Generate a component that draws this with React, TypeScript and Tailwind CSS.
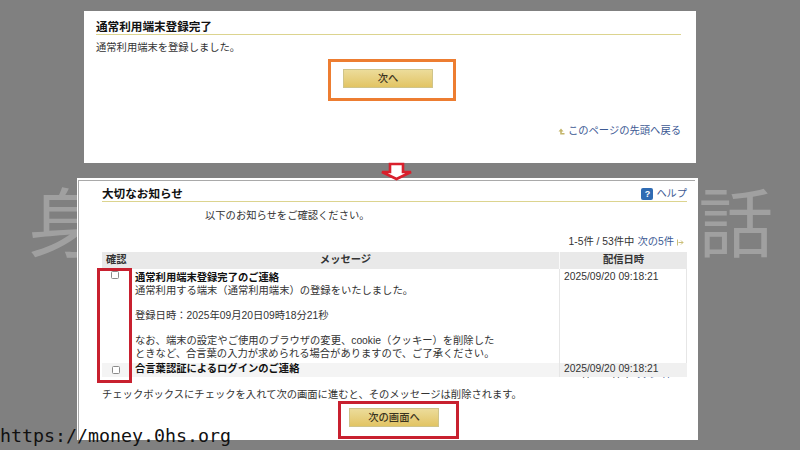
const jp = "font-['Liberation_Sans','Noto_Sans_CJK_JP',sans-serif]";

function GoldButton({ label, className }: { label: string; className: string }) {
  return (
    <div className={`flex h-[19px] w-[90px] items-center justify-center border border-[#cfc48a] bg-gradient-to-b from-[#ecdc9a] to-[#e2c463] text-[10.3px] font-medium text-[#3a3320] ${className}`}>
      {label}
    </div>
  );
}

function HeadingBar({ title, children, className }: { title: string; children?: React.ReactNode; className: string }) {
  return (
    <div className={`flex items-end justify-between border-b border-[#dcd48f] ${className}`}>
      <span className="text-[11.6px] font-bold leading-[14px] text-[#111]">{title}</span>
      {children}
    </div>
  );
}

function Checkbox() {
  return <span className="block h-[8px] w-[8px] rounded-[1.5px] border border-[#8a8a8a] bg-white" />;
}

export default function App() {
  return (
    <div className={`relative h-[450px] w-[800px] overflow-hidden bg-[#808080] ${jp}`}>
      {/* Watermark, seen only beside the panels */}
      <div className="absolute left-[28px] top-[176px] flex w-[745px] justify-between text-[74.5px] leading-[100px] text-[#a0a0a0]">
        <span>身</span>
        <span>話</span>
      </div>

      <div className="relative flex flex-col">
        <section className="ml-[84px] mt-[11px] h-[152px] w-[612px] bg-white pl-[12px] pr-[15px] pt-[9px]">
          <HeadingBar title="通常利用端末登録完了" className="h-[15px]" />
          <p className="mt-[6px] text-[10.3px] leading-[14px] text-[#333]">通常利用端末を登録しました。</p>
          <div className="mt-[14px] flex justify-center">
            <GoldButton label="次へ" className="ml-[-1px]" />
          </div>
          <div className="mt-[36px] flex items-center justify-end gap-[3px]">
            <svg width="7" height="7" viewBox="0 0 7 7">
              <path d="M3 0.5L0.5 3.5H2.2V6.5H6.5V5H3.8V3.5H5.5Z" fill="#c4b56a" />
            </svg>
            <span className="text-[10.3px] leading-[14px] text-[#3d5a94]">このページの先頭へ戻る</span>
          </div>
        </section>

        <section className="ml-[77px] mt-[15px] h-[262px] w-[621px] bg-white pl-[1px] pr-[3px] pt-[2px]">
          <div className="h-full border-l border-t border-[#a9a9a9] pl-[23px] pr-[8px] pt-[8px]">
            <HeadingBar title="大切なお知らせ" className="h-[13px]">
              <span className="flex items-center gap-[3px] pb-[1px] text-[10.2px] leading-[12px] text-[#3d5a94]">
                <span className="flex h-[12px] w-[12px] items-center justify-center rounded-[2px] bg-[#2f6bb3] text-[9px] font-bold leading-none text-white">?</span>
                ヘルプ
              </span>
            </HeadingBar>
            <p className="ml-[103px] mt-[7px] text-[10.3px] leading-[14px] text-[#333]">以下のお知らせをご確認ください。</p>
            <div className="mt-[12px] flex h-[14px] items-center justify-end gap-[1px] pr-[3px] text-[10.3px] text-[#333]">
              <span>1-5件 / 53件中</span>
              <span className="ml-[2px] text-[#3d5a94]">次の5件</span>
              <svg width="7" height="7" viewBox="0 0 7 7" className="ml-[2px]">
                <path d="M0.5 0.5V6.5M1.5 3.5H6M4 1.5L6 3.5L4 5.5" fill="none" stroke="#cbbf78" strokeWidth="1" />
              </svg>
            </div>
            <div className="mt-[3px] text-[10.3px] leading-[12.6px] text-[#333]">
              <div className="grid h-[17px] grid-cols-[30px_427px_128px] items-center bg-[#e9e9e9] font-bold text-[#333]">
                <span className="pl-[4px]">確認</span>
                <span className="text-center">メッセージ</span>
                <span className="flex h-full items-center justify-center border-l border-[#fafafa]">配信日時</span>
              </div>
              <div className="grid h-[111px] grid-cols-[30px_427px_128px] content-start overflow-hidden">
                <div className="h-[94px] pl-[9px] pt-[2px]"><Checkbox /></div>
                <div className="h-[94px] pl-[3px] pt-[3px]">
                  <div className="font-bold text-[#111]">通常利用端末登録完了のご連絡</div>
                  <div>通常利用する端末（通常利用端末）の登録をいたしました。</div>
                  <div className="mt-[12.6px]">登録日時：2025年09月20日09時18分21秒</div>
                  <div className="mt-[12.6px]">なお、端末の設定やご使用のブラウザの変更、cookie（クッキー）を削除した</div>
                  <div>ときなど、合言葉の入力が求められる場合がありますので、ご了承ください。</div>
                </div>
                <div className="h-[94px] border-l border-r border-[#e6e6e6] pl-[4px] pt-[2px]">2025/09/20 09:18:21</div>
                <div className="flex h-[14px] items-center bg-[#f4f4f4] pl-[10px]"><Checkbox /></div>
                <div className="h-[14px] bg-[#f4f4f4] pl-[3px] font-bold text-[#111]">合言葉認証によるログインのご連絡</div>
                <div className="h-[14px] border-l border-[#e6e6e6] bg-[#f0f0f0] pl-[4px]">2025/09/20 09:18:21</div>
                {/* Bottom edge of the pager, cut off by the row above it */}
                <div className="col-span-3 h-[3px] overflow-hidden pr-[15px] text-right">
                  <div className="mt-[-9px] flex justify-end gap-[3px]">
                    <span>1-5件 / 53件中</span>
                    <span className="text-[#3d5a94]">次の5件</span>
                  </div>
                </div>
              </div>
            </div>
            <p className="mt-[8px] text-[10.3px] leading-[14px] text-[#333]">チェックボックスにチェックを入れて次の画面に進むと、そのメッセージは削除されます。</p>
            <div className="ml-[247px] mt-[6px]">
              <GoldButton label="次の画面へ" className="" />
            </div>
          </div>
        </section>
      </div>

      {/* Annotation frames over the screenshots */}
      <div className="absolute left-[328px] top-[59px] h-[42px] w-[128px] border-[3px] border-[#ed7d31]" />
      <div className="absolute left-[97px] top-[268px] h-[115px] w-[35px] border-[3px] border-[#c8202f]" />
      <div className="absolute left-[338px] top-[401px] h-[38px] w-[121px] border-[3px] border-[#c8202f]" />

      {/* Arrow between the panels */}
      <svg className="absolute left-[378px] top-[162px]" width="37" height="19" viewBox="0 0 37 19">
        <path d="M12 2H25V10H33L18.5 17L4 10H12Z" fill="#fff" stroke="#d9202c" strokeWidth="2.6" />
      </svg>

      <div className="absolute bottom-[1px] left-[0px] font-['DejaVu_Sans_Mono',monospace] text-[18.3px] leading-[27px] text-[#111]">
        https://money.0hs.org
      </div>
    </div>
  );
}
